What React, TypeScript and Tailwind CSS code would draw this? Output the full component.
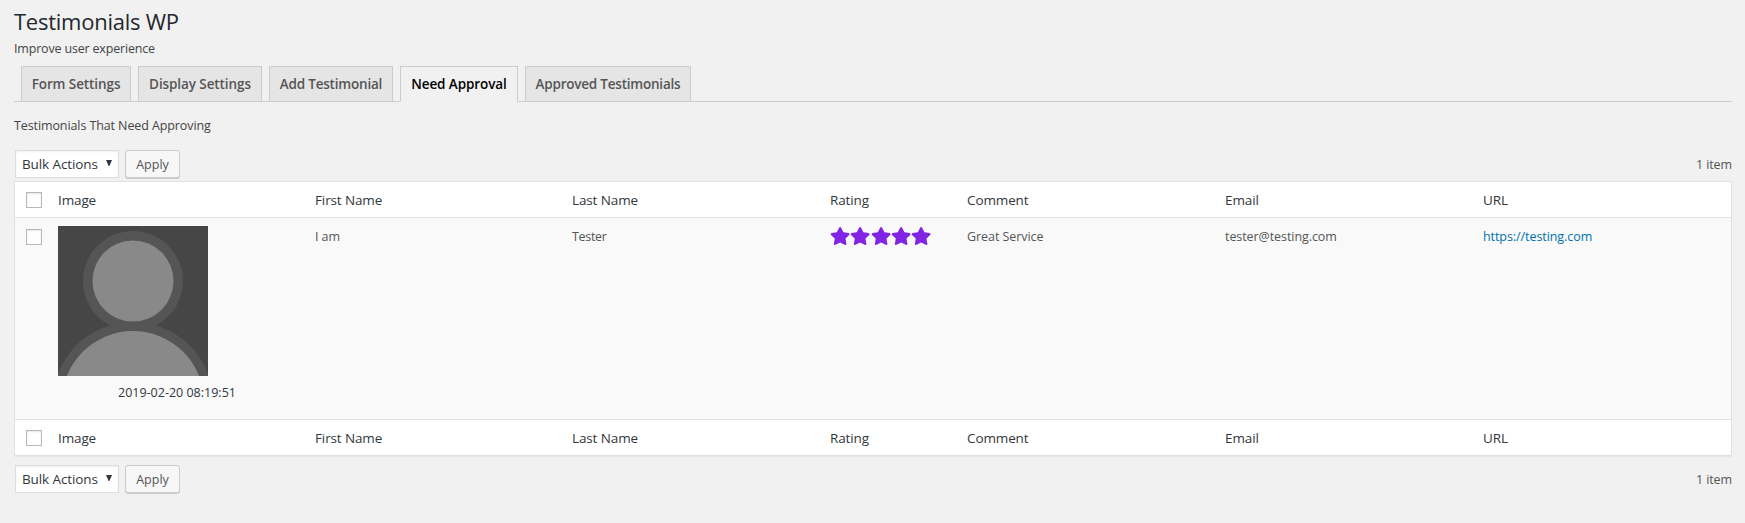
import { FaStar } from "react-icons/fa";

const tabs = [
  { label: "Form Settings", width: "w-[110px]", text: "tracking-[-0.09px]" },
  { label: "Display Settings", width: "w-[124px]", text: "tracking-[-0.09px]" },
  { label: "Add Testimonial", width: "w-[124px]", text: "tracking-[-0.2px]" },
  { label: "Need Approval", width: "w-[118px]", text: "tracking-[-0.09px]", active: true },
  { label: "Approved Testimonials", width: "w-[166px]", text: "tracking-[-0.22px]" },
];

const headings = ["Image", "First Name", "Last Name", "Rating", "Comment", "Email", "URL"];

const columns =
  "grid grid-cols-[43px_257px_257px_258px_137px_258px_258px_minmax(0,1fr)]";

function Checkbox() {
  return (
    <span className="block size-4 border border-[#b4b9be] bg-white shadow-[inset_0_1px_2px_rgba(0,0,0,0.1)]" />
  );
}

function HeadingRow() {
  return (
    <div className={`${columns} h-[35px] bg-white text-[13.5px] leading-[37px] tracking-[-0.12px] text-[#32373c]`}>
      <div className="pt-[10px] pl-[11px]">
        <Checkbox />
      </div>
      {headings.map((h) => (
        <div key={h}>{h}</div>
      ))}
    </div>
  );
}

function Avatar() {
  return (
    <svg className="block size-[150px]" viewBox="0 0 150 150">
      <rect width="150" height="150" fill="#464646" />
      <circle cx="75" cy="55" r="50" fill="#555" />
      <circle cx="75" cy="176.5" r="80.5" fill="#555" />
      <circle cx="75" cy="55" r="40.5" fill="#898989" />
      <circle cx="75" cy="176" r="71" fill="#898989" />
    </svg>
  );
}

function Toolbar() {
  return (
    <div className="flex h-[29px] items-start pl-px">
      <div className="flex h-7 w-[104px] items-center border border-[#ddd] bg-white pl-[6px] text-[13.5px] tracking-[-0.1px] text-[#32373c] shadow-[inset_0_1px_2px_rgba(0,0,0,0.07)]">
        <span className="w-[84px] whitespace-nowrap pt-[1px]">Bulk Actions</span>
        <svg className="-mt-[3px] h-[6px] w-[6px]" viewBox="0 0 6 6">
          <path d="M0 0h6L3.4 6h-.8z" fill="#32373c" />
        </svg>
      </div>
      <button className="ml-[6px] h-7 w-[55px] rounded-[3px] border border-[#ccc] bg-[#f7f7f7] pt-px text-[12.5px] leading-[26px] text-[#555] shadow-[0_1px_0_#ccc]">
        Apply
      </button>
      <span className="ml-auto text-[12.5px] leading-[30px] tracking-[-0.1px] text-[#555]">1 item</span>
    </div>
  );
}

export default function App() {
  return (
    <div className="h-[523px] bg-[#f1f1f1] pr-[13px] pl-[14px] font-['Open_Sans',sans-serif] text-[12.5px] text-[#444]">
      <h1 className="h-[38px] pt-[6px] text-[22px] leading-[30px] tracking-[-0.25px] text-[#23282d]">Testimonials WP</h1>
      <p className="h-7 pt-px leading-5 tracking-[-0.18px]">Improve user experience</p>
      <nav className="flex h-[36px] gap-[7px] border-b border-[#ccc] pl-[7px]">
        {tabs.map((t) => (
          <div
            key={t.label}
            className={`${t.width} ${t.text} h-[36px] border border-[#ccc] text-center text-[13.5px] leading-[35px] font-semibold whitespace-nowrap ${
              t.active ? "border-b-[#f1f1f1] bg-[#f1f1f1] text-black" : "bg-[#e5e5e5] text-[#555]"
            }`}
          >
            {t.label}
          </div>
        ))}
      </nav>
      <p className="h-12 pt-[14px] leading-5 tracking-[-0.1px]">Testimonials That Need Approving</p>
      <Toolbar />
      <div className="mt-[2px] border border-[#e1e1e1] shadow-[0_1px_1px_rgba(0,0,0,0.04)]">
        <HeadingRow />
        <div className={`${columns} h-[203px] border-y border-[#e1e1e1] bg-[#f9f9f9] pt-2 leading-[22px] tracking-[-0.07px] text-[#555]`}>
          <div className="pt-[3px] pl-[11px]">
            <Checkbox />
          </div>
          <div>
            <Avatar />
            <p className="pt-[6px] pl-[60px] tracking-normal text-[#32373c]">2019-02-20 08:19:51</p>
          </div>
          <div>I am</div>
          <div className="tracking-[-0.3px]">Tester</div>
          <div className="pt-px text-[#8224e3]">
            <div className="flex">
              {[0, 1, 2, 3, 4].map((i) => (
                <FaStar key={i} className="h-[18px] w-[20.25px]" />
              ))}
            </div>
          </div>
          <div>Great Service</div>
          <div>tester@testing.com</div>
          <a className="text-[#0073aa]">https://testing.com</a>
        </div>
        <HeadingRow />
      </div>
      <div className="pt-[9px]">
        <Toolbar />
      </div>
    </div>
  );
}
